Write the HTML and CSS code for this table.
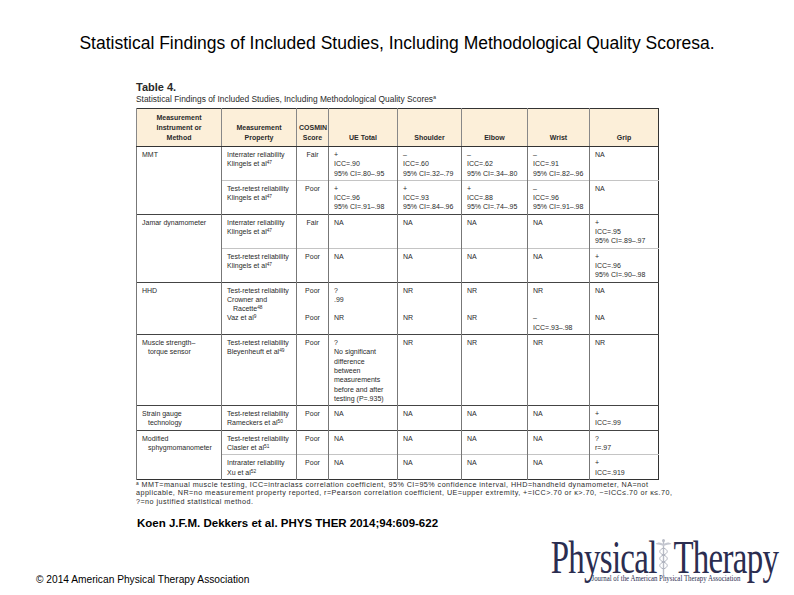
FILE: index.html
```html
<!DOCTYPE html>
<html>
<head>
<meta charset="utf-8">
<link rel="stylesheet" href="styles.css">
</head>
<body>
<div class="page">
  <h1 class="title">Statistical Findings of Included Studies, Including Methodological Quality Scoresa.</h1>
  <div class="figure">
    <div class="fig-label">Table 4.</div>
    <div class="fig-caption">Statistical Findings of Included Studies, Including Methodological Quality Scores<sup>a</sup></div>
    <table class="data">
      <colgroup>
        <col class="c1"><col class="c2"><col class="c3"><col class="c4"><col class="c5"><col class="c6"><col class="c7"><col class="c8">
      </colgroup>
      <thead>
        <tr>
          <th>Measurement<br>Instrument or<br>Method</th>
          <th>Measurement<br>Property</th>
          <th>COSMIN<br>Score</th>
          <th>UE Total</th>
          <th>Shoulder</th>
          <th>Elbow</th>
          <th>Wrist</th>
          <th>Grip</th>
        </tr>
      </thead>
      <tbody>
        <tr class="grp">
          <td rowspan="2">MMT</td>
          <td>Interrater reliability<br>Klingels et al<sup>47</sup></td>
          <td class="sc">Fair</td>
          <td>+<br>ICC=.90<br>95% CI=.80–.95</td>
          <td>–<br>ICC=.60<br>95% CI=.32–.79</td>
          <td>–<br>ICC=.62<br>95% CI=.34–.80</td>
          <td>–<br>ICC=.91<br>95% CI=.82–.96</td>
          <td>NA</td>
        </tr>
        <tr class="sub">
          <td>Test-retest reliability<br>Klingels et al<sup>47</sup></td>
          <td class="sc">Poor</td>
          <td>+<br>ICC=.96<br>95% CI=.91–.98</td>
          <td>+<br>ICC=.93<br>95% CI=.84–.96</td>
          <td>+<br>ICC=.88<br>95% CI=.74–.95</td>
          <td>–<br>ICC=.96<br>95% CI=.91–.98</td>
          <td>NA</td>
        </tr>
        <tr class="grp">
          <td rowspan="2">Jamar dynamometer</td>
          <td>Interrater reliability<br>Klingels et al<sup>47</sup></td>
          <td class="sc">Fair</td>
          <td>NA</td><td>NA</td><td>NA</td><td>NA</td>
          <td>+<br>ICC=.95<br>95% CI=.89–.97</td>
        </tr>
        <tr class="sub">
          <td>Test-retest reliability<br>Klingels et al<sup>47</sup></td>
          <td class="sc">Poor</td>
          <td>NA</td><td>NA</td><td>NA</td><td>NA</td>
          <td>+<br>ICC=.96<br>95% CI=.90–.98</td>
        </tr>
        <tr class="grp">
          <td>HHD</td>
          <td>Test-retest reliability<br>Crowner and<br><span class="ind">Racette<sup>48</sup></span><br>Vaz et al<sup>9</sup></td>
          <td class="sc">Poor<br><br><br>Poor</td>
          <td>?<br>.99<br><br>NR</td>
          <td>NR<br><br><br>NR</td>
          <td>NR<br><br><br>NR</td>
          <td>NR<br><br><br>–<br>ICC=.93–.98</td>
          <td>NA<br><br><br>NA</td>
        </tr>
        <tr class="grp">
          <td>Muscle strength–<br><span class="ind">torque sensor</span></td>
          <td>Test-retest reliability<br>Bleyenheuft et al<sup>49</sup></td>
          <td class="sc">Poor</td>
          <td>?<br>No significant<br>difference<br>between<br>measurements<br>before and after<br>testing (P=.935)</td>
          <td>NR</td><td>NR</td><td>NR</td><td>NR</td>
        </tr>
        <tr class="grp">
          <td>Strain gauge<br><span class="ind">technology</span></td>
          <td>Test-retest reliability<br>Rameckers et al<sup>50</sup></td>
          <td class="sc">Poor</td>
          <td>NA</td><td>NA</td><td>NA</td><td>NA</td>
          <td>+<br>ICC=.99</td>
        </tr>
        <tr class="grp">
          <td rowspan="2">Modified<br><span class="ind">sphygmomanometer</span></td>
          <td>Test-retest reliability<br>Clasler et al<sup>51</sup></td>
          <td class="sc">Poor</td>
          <td>NA</td><td>NA</td><td>NA</td><td>NA</td>
          <td>?<br>r=.97</td>
        </tr>
        <tr class="sub">
          <td>Intrarater reliability<br>Xu et al<sup>52</sup></td>
          <td class="sc">Poor</td>
          <td>NA</td><td>NA</td><td>NA</td><td>NA</td>
          <td>+<br>ICC=.919</td>
        </tr>
      </tbody>
    </table>
    <p class="footnote"><sup>a</sup> MMT=manual muscle testing, ICC=intraclass correlation coefficient, 95% CI=95% confidence interval, HHD=handheld dynamometer, NA=not<br>applicable, NR=no measurement property reported, r=Pearson correlation coefficient, UE=upper extremity, +=ICC&gt;.70 or κ&gt;.70, −=ICC≤.70 or κ≤.70,<br>?=no justified statistical method.</p>
  </div>
  <div class="credit">Koen J.F.M. Dekkers et al. PHYS THER 2014;94:609-622</div>
  <div class="footer">
    <div class="copyright">© 2014 American Physical Therapy Association</div>
    <div class="logo">
      <div class="logo-main">
        <span class="logo-word w1"><span class="lw">Physical</span></span>
        <svg class="caduceus" width="17" height="40" viewBox="0 0 17 40" aria-hidden="true">
          <line x1="8.5" y1="3" x2="8.5" y2="38" stroke="#b9bcc6" stroke-width="1.4"/>
          <path d="M8.5 7 C5.5 5 2.5 5 0.5 7 C3.5 7.5 5.5 8 8.5 9 C11.5 8 13.5 7.5 16.5 7 C14.5 5 11.5 5 8.5 7 Z" fill="#c4c7d0"/>
          <path d="M8.5 11 C3.5 13 3.5 16 8.5 18 C13.5 20 13.5 23 8.5 25 C3.5 27 3.5 30 8.5 32" fill="none" stroke="#b0b4bf" stroke-width="1"/>
          <path d="M8.5 11 C13.5 13 13.5 16 8.5 18 C3.5 20 3.5 23 8.5 25 C13.5 27 13.5 30 8.5 32" fill="none" stroke="#b0b4bf" stroke-width="1"/>
          <circle cx="8.5" cy="3.5" r="1.5" fill="#b9bcc6"/>
        </svg>
        <span class="logo-word w2"><span class="lw">Therapy</span></span>
      </div>
      <div class="logo-sub">Journal of the American Physical Therapy Association</div>
    </div>
  </div>
</div>
</body>
</html>
```

FILE: styles.css
```css
html, body {
  margin: 0;
  padding: 0;
  background: #ffffff;
}

body {
  width: 794px;
  height: 595px;
  overflow: hidden;
  font-family: "Liberation Sans", Arial, sans-serif;
  color: #000000;
}

.page {
  display: flex;
  flex-direction: column;
  height: 595px;
}

.title {
  margin: 33px 0 0;
  text-align: center;
  font-size: 17.5px;
  line-height: 20px;
  font-weight: normal;
}

.figure {
  margin: 28px 0 0 136px;
  width: 524px;
  color: #2a2a2a;
}

.fig-label {
  font-size: 11px;
  line-height: 13px;
  font-weight: bold;
}

.fig-caption {
  font-size: 8.4px;
  line-height: 10px;
  margin-bottom: 4px;
}

.fig-caption sup {
  font-size: 5.5px;
  vertical-align: 3px;
  line-height: 0;
}

.data {
  border-collapse: collapse;
  table-layout: fixed;
  width: 523px;
  border: 1px solid #333333;
  font-size: 7px;
  line-height: 9.3px;
}

.c1 { width: 85px; }
.c2 { width: 75px; }
.c3 { width: 32px; }
.c4 { width: 69px; }
.c5 { width: 64px; }
.c6 { width: 66px; }
.c7 { width: 62px; }
.c8 { width: 69px; }

.data th {
  background: #fcefd9;
  font-weight: bold;
  text-align: center;
  vertical-align: bottom;
  padding: 4px 2px 3px;
  line-height: 10px;
  border-left: 1px solid #888888;
  border-bottom: 1px solid #333333;
  white-space: nowrap;
}

.data td {
  vertical-align: top;
  text-align: left;
  padding: 3px 3px 2px 5px;
  border-left: 1px solid #777777;
  white-space: nowrap;
}

.data td.sc {
  text-align: center;
  padding-left: 2px;
  padding-right: 2px;
}

.data tr.grp td {
  border-top: 1px solid #444444;
}

.data tr.sub td {
  border-top: 1px solid #c4c4c4;
}

.data sup {
  font-size: 4.8px;
  vertical-align: 2.5px;
  line-height: 0;
}

.ind {
  padding-left: 6px;
}

.footnote {
  margin: 1px 0 0;
  font-size: 7.2px;
  line-height: 8.5px;
  letter-spacing: 0.45px;
  white-space: nowrap;
}

.footnote sup {
  font-size: 4.8px;
  vertical-align: 2.5px;
  line-height: 0;
}

.credit {
  margin: 10px 0 0 137px;
  font-size: 11.5px;
  line-height: 14px;
  font-weight: bold;
}

.footer {
  display: flex;
  justify-content: space-between;
  align-items: flex-start;
  margin-top: 4px;
  padding: 0 14px 0 36px;
}

.copyright {
  font-size: 10.2px;
  line-height: 12px;
  margin-top: 40px;
}

.logo {
  width: 228px;
  display: flex;
  flex-direction: column;
  align-items: center;
  color: #2b2d50;
  font-family: "Liberation Serif", "Times New Roman", serif;
}

.logo-main {
  display: flex;
  align-items: flex-start;
  height: 40px;
  margin-top: 3px;
}

.logo-word {
  flex: none;
  display: flex;
  justify-content: center;
  font-size: 47px;
  line-height: 40px;
  letter-spacing: -1px;
}

.lw {
  display: block;
  flex: none;
  white-space: nowrap;
  transform: scaleX(0.7);
}

.w1 { width: 103px; }
.w2 { width: 108px; }

.caduceus {
  flex: none;
}

.logo-sub {
  font-size: 9px;
  line-height: 10px;
  transform: scaleX(0.76);
  white-space: nowrap;
  margin-top: -4px;
}
```
